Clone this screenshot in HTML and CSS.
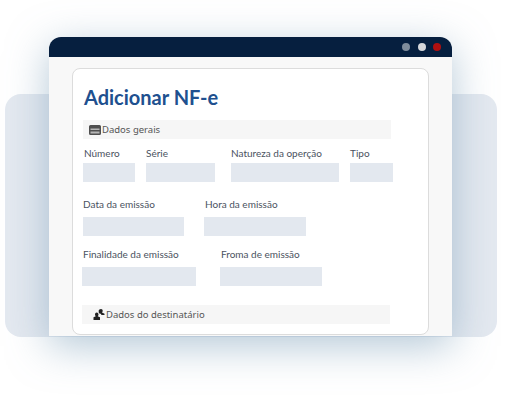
FILE: index.html
```html
<!DOCTYPE html>
<html lang="pt">
<head>
<meta charset="utf-8">
<title>Adicionar NF-e</title>
<link rel="stylesheet" href="styles.css">
</head>
<body>
<div class="stage">
  <div class="backdrop"></div>
  <div class="window">
    <div class="titlebar">
      <span class="dot dot-grey"></span>
      <span class="dot dot-light"></span>
      <span class="dot dot-red"></span>
    </div>
    <div class="card">
      <h1 class="title">Adicionar NF-e</h1>
      <div class="section section-a">
        <svg class="icon" viewBox="0 0 12 10" width="12" height="10"><path fill="#4f4f4f" d="M1.500 0h9A1.500 1.500 0 0 1 12 1.500v7A1.500 1.500 0 0 1 10.500 10h-9A1.500 1.500 0 0 1 0 8.500v-7A1.500 1.500 0 0 1 1.500 0z"/><path fill="#b5b5b5" d="M1.500 3.500h9v1.500h-9zM1.500 6.500h9V8.500h-9z"/></svg>
        <span>Dados gerais</span>
      </div>
      <div class="row row-1">
        <div class="field f-num"><label>Número</label><div class="input"></div></div>
        <div class="field f-serie"><label>Série</label><div class="input"></div></div>
        <div class="field f-nat"><label>Natureza da operção</label><div class="input"></div></div>
        <div class="field f-tipo"><label>Tipo</label><div class="input"></div></div>
      </div>
      <div class="row row-2">
        <div class="field f-data"><label>Data da emissão</label><div class="input"></div></div>
        <div class="field f-hora"><label>Hora da emissão</label><div class="input"></div></div>
      </div>
      <div class="row row-3">
        <div class="field f-fin"><label>Finalidade da emissão</label><div class="input"></div></div>
        <div class="field f-forma"><label>Froma de emissão</label><div class="input"></div></div>
      </div>
      <div class="section section-b">
        <svg class="icon" viewBox="0 0 12 11" width="12" height="11"><path fill="#222" d="M8 0c1 0 1.700.7 1.700 1.800 0 .8-.3 1.400-.7 1.800L11.500 4.700V6H8.200V5L6 4.200c-.3-.5-.3-1.500-.3-2.400C5.700.7 7 0 8 0zM3.700 3.500c1 0 1.800.8 1.800 1.900 0 .8-.3 1.400-.8 1.800L7 8.300V11H.5V8.300l2.300-1.100c-.5-.4-.8-1-.8-1.800 0-1.100.8-1.900 1.700-1.900z"/></svg>
        <span>Dados do destinatário</span>
      </div>
    </div>
  </div>
</div>
</body>
</html>
```
FILE: styles.css
```css
html, body {
  margin: 0;
  padding: 0;
  background: #fff;
  overflow: hidden;
}
.stage {
  position: relative;
  width: 505px;
  height: 400px;
  padding: 37px 53px 0 49px;
  box-sizing: border-box;
  font-family: "Lato", sans-serif;
}
.backdrop {
  position: absolute;
  left: 5px;
  top: 94px;
  width: 492px;
  height: 243px;
  border-radius: 16px;
  background: #e4e9f0;
}
.window {
  position: relative;
  width: 403px;
  height: 299px;
  background: #f8f8f8;
  border-radius: 12px 12px 0 0;
  box-shadow: 0 10px 40px rgba(105, 145, 175, 0.5);
}
.titlebar {
  height: 20px;
  background: #061f3f;
  border-radius: 12px 12px 0 0;
  display: flex;
  justify-content: flex-end;
  align-items: center;
  gap: 7.500px;
  padding-right: 11px;
}
.dot {
  width: 8px;
  height: 8px;
  border-radius: 50%;
}
.dot-grey { background: #7f8c9b; }
.dot-light { background: #d5d8dc; }
.dot-red { background: #b01010; }
.card {
  margin: 11px 0 0 23px;
  width: 357px;
  height: 267px;
  box-sizing: border-box;
  background: #fff;
  border: 1px solid #dcdcdc;
  border-radius: 8px;
  padding: 0 0 0 10px;
}
.title {
  margin: 0;
  padding-top: 16px;
  padding-left: 1px;
  height: 35px;
  font-size: 20px;
  line-height: 25px;
  font-weight: 700;
  color: #20508f;
}
.section {
  height: 19px;
  background: #f6f6f6;
  display: flex;
  align-items: center;
  gap: 1px;
  font-family: "Noto Sans", sans-serif;
  font-size: 9.500px;
  color: #555;
  box-sizing: border-box;
  width: 308px;
}
.section-a {
  padding-left: 6px;
}
.section-b {
  margin-left: -1px;
  margin-top: 19px;
  padding-left: 11px;
}
.icon {
  flex: none;
}
.row {
  display: flex;
}
.field label {
  display: block;
  font-size: 10px;
  line-height: 14px;
  color: #4a5260;
  white-space: nowrap;
}
.input {
  height: 19px;
  background: #e3e8ef;
}
.row-1 { margin-top: 7px; }
.row-1 label { margin-bottom: 3px; }
.row-2 { margin-top: 15px; }
.row-2 label { margin-bottom: 6px; }
.row-3 { margin-top: 11px; margin-left: -1px; }
.row-3 label { margin-left: 1px; margin-bottom: 6px; }
.f-num label, .f-hora label { margin-left: 1px; }
.f-num { width: 52px; margin-right: 11px; }
.f-serie { width: 69px; margin-right: 16px; }
.f-nat { width: 108px; margin-right: 11px; }
.f-tipo { width: 43px; }
.f-data { width: 101px; margin-right: 20px; }
.f-hora { width: 102px; }
.f-fin { width: 114px; margin-right: 24px; }
.f-forma { width: 102px; }
```
